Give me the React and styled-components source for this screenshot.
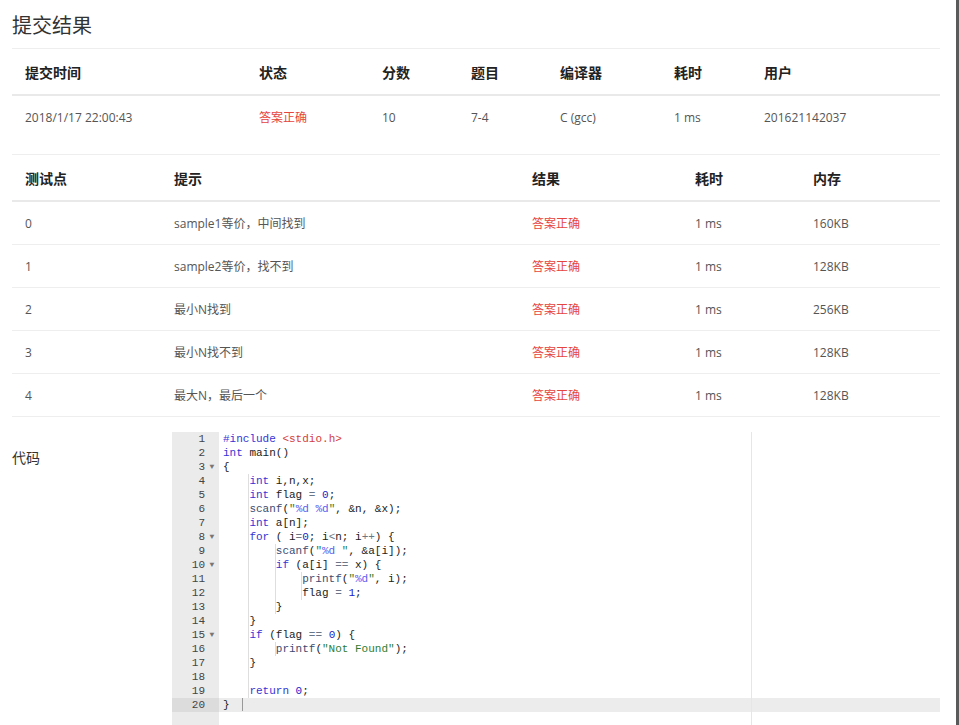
import React from "react";
import styled, { createGlobalStyle } from "styled-components";

const Global = createGlobalStyle`
  html, body { margin: 0; padding: 0; background: #fff; }
  body {
    font-family: "Open Sans", "Noto Sans CJK SC", sans-serif;
    color: #333;
    overflow: hidden;
  }
`;

const Frame = styled.div`
  width: 959px;
  height: 725px;
  box-sizing: border-box;
  border-right: 3px solid #5a5a5a;
  overflow: hidden;
`;

const Content = styled.div`
  padding: 0 16px 0 12px;
`;

const Title = styled.h1`
  margin: 0;
  padding: 12px 0 8px;
  font-size: 20px;
  line-height: 28px;
  font-weight: 400;
  color: #333;
  border-bottom: 1px solid #eeeeee;
`;

const Table = styled.div`
  margin-top: ${(p) => p.$gap || 0}px;
  border-top: ${(p) => (p.$topLine ? "1px solid #eeeeee" : "none")};
`;

const Row = styled.div`
  display: grid;
  grid-template-columns: ${(p) => p.$cols};
  align-items: center;
  height: ${(p) => p.$h}px;
  border-bottom: ${(p) => p.$border || "none"};
`;

const HeadCell = styled.div`
  padding-left: 13px;
  font-size: 14px;
  font-weight: 600;
  color: #222;
  white-space: nowrap;
`;

const Cell = styled.div`
  padding-left: 13px;
  font-size: 12px;
  color: ${(p) => (p.$ok ? "#e6453d" : "#555")};
  white-space: nowrap;
`;

const CodeSection = styled.div`
  margin-top: 15px;
  display: grid;
  grid-template-columns: 160px 768px;
`;

const Label = styled.div`
  padding-top: 16px;
  font-size: 14px;
  line-height: 20px;
  color: #333;
`;

const Editor = styled.div`
  display: flex;
  height: 300px;
  font-family: "Liberation Mono", "DejaVu Sans Mono", monospace;
  font-size: 11px;
  line-height: 14px;
`;

const Gutter = styled.div`
  width: 47px;
  background: #ebebeb;
  color: #444;
`;

const GutterCell = styled.div`
  display: flex;
  justify-content: flex-end;
  height: 14px;
  background: ${(p) => (p.$active ? "#dcdcdc" : "transparent")};
`;

const Fold = styled.span`
  width: 14px;
  text-align: center;
  font-size: 8px;
  color: #777;
`;

const CodeArea = styled.div`
  flex: 1;
  position: relative;
  &::after {
    content: "";
    position: absolute;
    top: 0;
    bottom: 0;
    left: 532px;
    width: 1px;
    background: #e6e6e6;
  }
`;

const Line = styled.div`
  height: 14px;
  padding-left: 4px;
  white-space: pre;
  color: #222;
  background: ${(p) => (p.$active ? "#ececec" : "transparent")};
`;

const Indent = styled.span`
  display: inline-block;
  width: 4ch;
  height: 14px;
  vertical-align: top;
  background: linear-gradient(to left, #dedede 1px, transparent 1px);
`;

const colors = {
  kw: "#3434d6",
  num: "#2020c8",
  str: "#2f7d32",
  esc: "#5a5cf0",
  hdr: "#d44040",
  op: "#687687",
  fn: "#3c4c72",
  p: "#222",
};

const Tok = styled.span`
  color: ${(p) => colors[p.$t] || "#222"};
`;

const Cursor = styled.span`
  display: inline-block;
  width: 1px;
  height: 13px;
  margin-left: 12px;
  vertical-align: top;
  background: #999;
`;

const cols1 = "234px 123px 89px 89px 114px 90px 1fr";
const cols2 = "149px 358px 163px 118px 1fr";

const head1 = ["提交时间", "状态", "分数", "题目", "编译器", "耗时", "用户"];
const data1 = ["2018/1/17 22:00:43", "答案正确", "10", "7-4", "C (gcc)", "1 ms", "201621142037"];

const head2 = ["测试点", "提示", "结果", "耗时", "内存"];
const data2 = [
  ["0", "sample1等价，中间找到", "160KB"],
  ["1", "sample2等价，找不到", "128KB"],
  ["2", "最小N找到", "256KB"],
  ["3", "最小N找不到", "128KB"],
  ["4", "最大N，最后一个", "128KB"],
];

const code = [
  { i: 0, t: [["#include", "kw"], [" "], ["<stdio.h>", "hdr"]] },
  { i: 0, t: [["int", "kw"], [" main()"]] },
  { i: 0, f: true, t: [["{"]] },
  { i: 1, t: [["int", "kw"], [" i,n,x;"]] },
  { i: 1, t: [["int", "kw"], [" flag "], ["=", "op"], [" "], ["0", "num"], [";"]] },
  { i: 1, t: [["scanf", "fn"], ["("], ['"', "str"], ["%d", "esc"], [" ", "str"], ["%d", "esc"], ['"', "str"], [", &n, &x);"]] },
  { i: 1, t: [["int", "kw"], [" a[n];"]] },
  { i: 1, f: true, t: [["for", "kw"], [" ( i"], ["=", "op"], ["0", "num"], ["; i"], ["<", "op"], ["n; i"], ["++", "op"], [") {"]] },
  { i: 2, t: [["scanf", "fn"], ["("], ['"', "str"], ["%d", "esc"], [' "', "str"], [", &a[i]);"]] },
  { i: 2, f: true, t: [["if", "kw"], [" (a[i] "], ["==", "op"], [" x) {"]] },
  { i: 3, t: [["printf", "fn"], ["("], ['"', "str"], ["%d", "esc"], ['"', "str"], [", i);"]] },
  { i: 3, t: [["flag "], ["=", "op"], [" "], ["1", "num"], [";"]] },
  { i: 2, t: [["}"]] },
  { i: 1, t: [["}"]] },
  { i: 1, f: true, t: [["if", "kw"], [" (flag "], ["==", "op"], [" "], ["0", "num"], [") {"]] },
  { i: 2, t: [["printf", "fn"], ["("], ['"Not Found"', "str"], [");"]] },
  { i: 1, t: [["}"]] },
  { i: 1, t: [] },
  { i: 1, t: [["return", "kw"], [" "], ["0", "num"], [";"]] },
  { i: 0, t: [["}"]], cursor: true },
];

export default function App() {
  return (
    <>
      <Global />
      <Frame>
        <Content>
          <Title>提交结果</Title>

          <Table>
            <Row $cols={cols1} $h={45} $border="2px solid #e9e9e9">
              {head1.map((h) => (
                <HeadCell key={h}>{h}</HeadCell>
              ))}
            </Row>
            <Row $cols={cols1} $h={42}>
              {data1.map((d, i) => (
                <Cell key={i} $ok={i === 1}>
                  {d}
                </Cell>
              ))}
            </Row>
          </Table>

          <Table $gap={16} $topLine>
            <Row $cols={cols2} $h={45} $border="2px solid #e9e9e9">
              {head2.map((h) => (
                <HeadCell key={h}>{h}</HeadCell>
              ))}
            </Row>
            {data2.map(([n, hint, mem]) => (
              <Row key={n} $cols={cols2} $h={42} $border="1px solid #eeeeee">
                <Cell>{n}</Cell>
                <Cell>{hint}</Cell>
                <Cell $ok>答案正确</Cell>
                <Cell>1 ms</Cell>
                <Cell>{mem}</Cell>
              </Row>
            ))}
          </Table>

          <CodeSection>
            <Label>代码</Label>
            <Editor>
              <Gutter>
                {code.map((l, idx) => (
                  <GutterCell key={idx} $active={idx === code.length - 1}>
                    <span>{idx + 1}</span>
                    <Fold>{l.f ? "▼" : ""}</Fold>
                  </GutterCell>
                ))}
              </Gutter>
              <CodeArea>
                {code.map((l, idx) => (
                  <Line key={idx} $active={idx === code.length - 1}>
                    {Array.from({ length: l.i }).map((_, k) => (
                      <Indent key={k} />
                    ))}
                    {l.t.map(([text, type], k) => (
                      <Tok key={k} $t={type}>
                        {text}
                      </Tok>
                    ))}
                    {l.cursor && <Cursor />}
                  </Line>
                ))}
              </CodeArea>
            </Editor>
          </CodeSection>
        </Content>
      </Frame>
    </>
  );
}
